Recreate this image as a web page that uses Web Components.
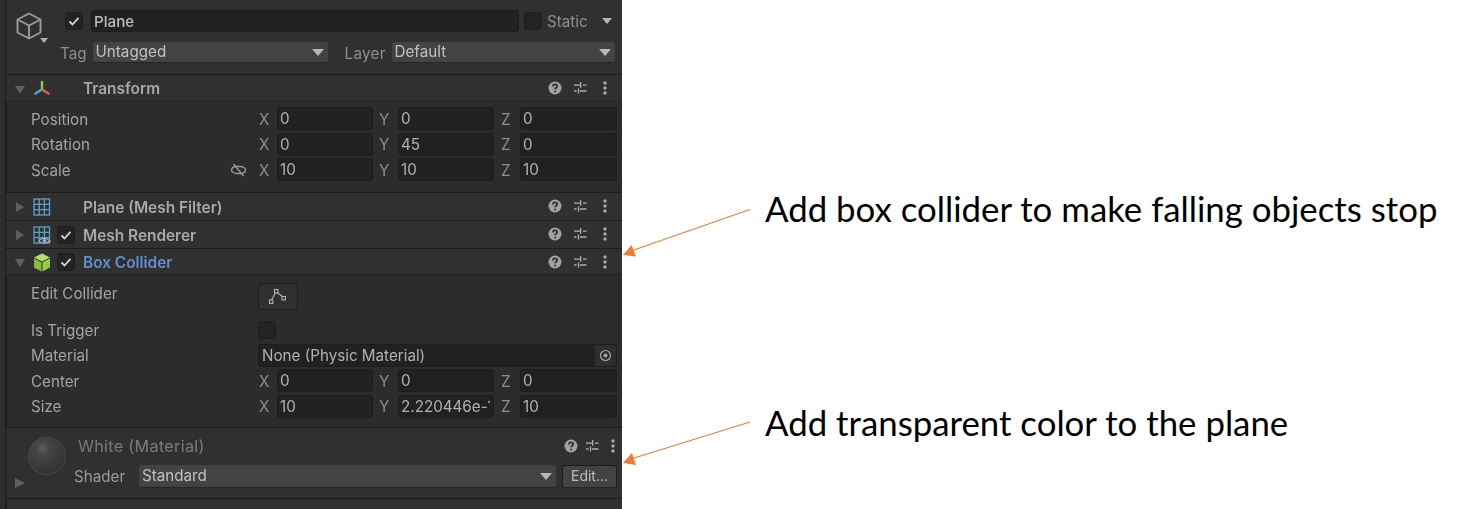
<!DOCTYPE html>
<html>
<head>
<meta charset="utf-8">
<title>Inspector</title>
<style>
  html, body { margin: 0; height: 509px; overflow: hidden; background: #fff; }
  body { display: flex; font-family: Inter, "Noto Sans", sans-serif; }
</style>
</head>
<body>
<u-inspector>
  <u-object-header></u-object-header>

  <u-section title="Transform" open>
    <svg slot="icon" width="18" height="18" viewBox="0 0 18 18" fill="none" stroke-width="2.4" stroke-linecap="round">
      <path d="M9 9V2" stroke="#9bc53d"/><path d="M8 10L2.500 13.500" stroke="#4aa3d8"/><path d="M10 10l5.500 3.500" stroke="#d9683a"/>
    </svg>
  </u-section>
  <u-body style="height:91px;padding-top:4.5px">
    <u-vector label="Position" x="0" y="0" z="0"></u-vector>
    <u-vector label="Rotation" x="0" y="45" z="0"></u-vector>
    <u-vector label="Scale" x="10" y="10" z="10" link></u-vector>
  </u-body>

  <u-section title="Plane (Mesh Filter)">
    <u-grid-icon slot="icon"></u-grid-icon>
  </u-section>
  <u-section title="Mesh Renderer" check>
    <u-grid-icon slot="icon" eye></u-grid-icon>
  </u-section>
  <u-section title="Box Collider" open check accent>
    <u-cube-icon slot="icon"></u-cube-icon>
  </u-section>
  <u-body style="height:152.5px">
    <u-prop label="Edit Collider" style="height:36px">
      <u-button style="width:40px;height:27px;margin-top:7px">
        <svg width="20" height="18" viewBox="0 0 20 18" fill="none" stroke="#b4b4b4" stroke-width="1.1">
          <rect x="1.500" y="12" width="3.400" height="3.400"/><rect x="14" y="8.500" width="3.400" height="3.400"/><rect x="6.500" y="1.500" width="3.400" height="3.400"/>
          <path d="M3.500 12L7.300 4.900M9.500 4.700L14.500 8.700"/>
        </svg>
      </u-button>
    </u-prop>
    <u-prop label="Is Trigger" style="height:31.5px;padding-top:5.5px"><u-check></u-check></u-prop>
    <u-prop label="Material" style="height:25.5px">
      <u-objfield>None (Physic Material)</u-objfield>
    </u-prop>
    <u-vector label="Center" x="0" y="0" z="0"></u-vector>
    <u-vector label="Size" x="10" y="2.220446e-16" z="10"></u-vector>
  </u-body>

  <u-material></u-material>
  <u-body style="flex:1;background:#303030;border-bottom:0"></u-body>
</u-inspector>

<u-notes>
  <u-note style="height:34px;margin-top:191px">Add box collider to make falling objects stop</u-note>
  <u-note style="height:34px;margin-top:180px">Add transparent color to the plane</u-note>
</u-notes>

<script>
// small helper so each element only has to give its css + html
class UBase extends HTMLElement {
  constructor() {
    super();
    this.attachShadow({ mode: 'open' });
  }
  connectedCallback() { this.shadowRoot.innerHTML = `<style>${this.css()}</style>${this.html()}`; }
  css() { return ':host{display:block}'; }
  html() { return '<slot></slot>'; }
}

const TOOLS = `
  <svg width="16" height="16" viewBox="0 0 16 16"><circle cx="8" cy="8" r="6.5" fill="#a2a2a2"/>
    <path d="M5.9 6.5c0-1.4 1-2.1 2.2-2.1s2.1.8 2.1 1.9c0 1.500-2.100 1.500-2.100 3" fill="none" stroke="#303030" stroke-width="1.700"/>
    <circle cx="8.100" cy="11.500" r="1" fill="#303030"/></svg>
  <svg width="14" height="14" viewBox="0 0 14 14" stroke="#b0b0b0" stroke-width="1.300" fill="none">
    <path d="M1 4.200h6M7.700 1v5.800M10 4.200h3.500M1 10h2.500M5.500 7.500V12.500M7 10h6.500"/></svg>
  <svg width="4" height="14" viewBox="0 0 4 14" fill="#adadad"><rect x=".5" y=".5" width="3" height="3" rx=".8"/><rect x=".5" y="5.500" width="3" height="3" rx=".8"/><rect x=".5" y="10.500" width="3" height="3" rx=".8"/></svg>`;

class UInspector extends UBase {
  css() {
    return `:host{display:flex;flex-direction:column;box-sizing:border-box;width:622px;height:509px;flex:none;
      background:#2e2e2e;position:relative;padding-left:6px;
      font:15.2px Inter,"Noto Sans",sans-serif;color:#a4a4a4;filter:blur(.55px)}
      .line{position:absolute;left:5px;top:0;bottom:0;width:1.500px;background:#1c1c1c}`;
  }
  html() { return `<div class="line"></div><slot></slot>`; }
}

class UCheck extends UBase {
  css() {
    return `:host{display:block;flex:none;box-sizing:border-box;width:18px;height:18px;background:#232323;border:1px solid #1e1e1e;border-radius:3px;position:relative}
      svg{position:absolute;left:2px;top:2px}`;
  }
  html() {
    return this.hasAttribute('on') ? `<svg width="12" height="12" viewBox="0 0 12 12" fill="none" stroke="#d4d4d4" stroke-width="1.800"><path d="M1.500 6.500L4.500 9.500L10.500 2.800"/></svg>` : '';
  }
}

class UDropdown extends UBase {
  css() {
    return `:host{display:flex;align-items:center;box-sizing:border-box;height:21px;background:#434343;border-radius:3px;border-bottom:1px solid #252525;
      padding:0 4px 1px 3px;color:#c0c0c0}
      .t{flex:1}
      i{width:0;height:0;border:6px solid transparent;border-top:7px solid #b8b8b8;border-bottom:0;margin-top:2px}`;
  }
  html() { return `<span class="t"><slot></slot></span><i></i>`; }
}

class UObjectHeader extends UBase {
  css() {
    return `:host{display:block;box-sizing:border-box;height:75px;border-bottom:1.500px solid #1c1c1c;background:#303030;position:relative}
      .cube{position:absolute;left:9px;top:11px}
      .arrow{position:absolute;left:34px;top:38px;width:0;height:0;border:4px solid transparent;border-top:5px solid #b0b0b0;border-bottom:0}
      .r1{display:flex;align-items:center;height:22px;padding:10px 0 0 59px}
      .name{box-sizing:border-box;width:428px;height:22px;margin-left:8px;background:#212121;border:1px solid #1c1c1c;border-radius:3px;color:#bdbdbd;padding:0 2px;line-height:22px;font-weight:500}
      .st{margin-left:5px;padding-top:1px;color:#8f8f8f}
      .tri{width:0;height:0;border:5.500px solid transparent;border-top:6.500px solid #b4b4b4;border-bottom:0;margin-left:14px}
      .r2{display:flex;align-items:center;height:21px;padding:10px 0 0 54px;color:#8f8f8f}
      .r2 span{padding-top:2px}
      u-dropdown.tag{width:235px;margin-left:6px}
      u-dropdown.layer{width:223px;margin-left:6px}
      .ll{margin-left:17px;width:41px;letter-spacing:.3px}`;
  }
  html() {
    return `<svg class="cube" width="28" height="30" viewBox="0 0 28 30" fill="none" stroke="#9c9c9c" stroke-width="1.900" stroke-linejoin="round">
        <path d="M14 2.500L25.500 8.500V21.500L14 27.500L2.500 21.500V8.500Z"/><path d="M2.500 8.500L14 14.500L25.500 8.500M14 14.500V27.500"/></svg>
      <div class="arrow"></div>
      <div class="r1"><u-check on></u-check><div class="name">Plane</div><u-check style="margin-left:5px"></u-check><span class="st">Static</span><span class="tri"></span></div>
      <div class="r2"><span>Tag</span><u-dropdown class="tag">Untagged</u-dropdown><span class="ll">Layer</span><u-dropdown class="layer">Default</u-dropdown></div>`;
  }
}

class USection extends UBase {
  css() {
    return `:host{display:flex;align-items:center;box-sizing:border-box;height:28px;background:#303030;border-bottom:1.500px solid #1c1c1c;position:relative;padding:2px 0 0 8px}
      :host([open]){height:26.500px;border-bottom:1px solid #262626}
      .fold{width:11px;flex:none;display:flex;justify-content:center}
      .fold i{width:0;height:0;border:5px solid transparent;border-left:8px solid #5f5f5f;border-right:0}
      :host([open]) .fold i{border:5.500px solid transparent;border-top:8px solid #5f5f5f;border-bottom:0;margin-top:2px}
      .icon{width:18px;height:18px;flex:none;margin-left:8px}
      .ck{width:26px;flex:none;margin-left:6px}
      .title{font-weight:600;color:#a8a8a8;font-size:15.4px;white-space:nowrap}
      :host([accent]) .title{color:#5e8fd0}
      .tools{position:absolute;left:541px;top:5px;display:grid;grid-template-columns:repeat(3,auto);column-gap:9px;align-items:center}
      .tools svg:nth-child(2){margin-left:1px}.tools svg:nth-child(3){margin-left:7px}`;
  }
  html() {
    const ck = this.hasAttribute('check') ? `<div class="ck"><u-check on></u-check></div>` : `<div class="ck"></div>`;
    return `<div class="fold"><i></i></div><div class="icon"><slot name="icon"></slot></div>${ck}
      <span class="title">${this.getAttribute('title')}</span><div class="tools">${TOOLS}</div>`;
  }
}

class UGridIcon extends UBase {
  css() { return `:host{display:block;width:18px;height:18px}`; }
  html() {
    const eye = this.hasAttribute('eye') ? `<path d="M6 15c2-3.500 8-3.500 11 0c-3 3-9 3-11 0Z" fill="#2f2f2f" stroke="#b0b0b0" stroke-width="1.200"/><circle cx="11.500" cy="15" r="1.700" fill="#b0b0b0"/>` : '';
    return `<svg width="18" height="19" viewBox="0 0 18 19" fill="none" stroke="#58a3c6" stroke-width="1.300" style="overflow:visible">
      <rect x="1" y="1" width="15.500" height="16"/><path d="M6.200 1V17M11.400 1V17M1 6.300H16.500M1 11.600H16.500"/>${eye}</svg>`;
  }
}

class UCubeIcon extends UBase {
  css() { return `:host{display:block;width:18px;height:18px}`; }
  html() {
    return `<svg width="18" height="19" viewBox="0 0 18 19" style="overflow:visible">
      <path d="M9 0.500L17 4.500L9 8.500L1 4.500Z" fill="#b6dd6c"/><path d="M1 5.500L8.500 9.300V18.500L1 14.500Z" fill="#86bb3c"/><path d="M17 5.500L9.500 9.300V18.500L17 14.500Z" fill="#98cc48"/></svg>`;
  }
}

class UBody extends UBase {
  css() { return `:host{display:block;box-sizing:border-box;background:#2c2c2c;border-bottom:1.500px solid #1c1c1c}`; }
}

class UField extends UBase {
  css() {
    return `:host{display:block;box-sizing:border-box;height:23px;background:#212121;border:1px solid #1d1d1d;border-radius:3px;
      padding:0 3px 0 2px;line-height:22.5px;color:#b2b2b2;white-space:nowrap}
      span{display:block;overflow:hidden}`;
  }
  html() { return `<span><slot></slot></span>`; }
}

class UVector extends UBase {
  css() {
    return `:host{display:grid;grid-template-columns:252px 19px 96px 25px 96px 26px 97px;height:25.500px;align-items:center}
      .l{padding:1px 11px 0 25px;display:flex;justify-content:space-between;align-items:center}
      .a{color:#8f8f8f;padding-top:1px}`;
  }
  html() {
    const link = this.hasAttribute('link') ? `<svg width="17" height="14" viewBox="0 0 17 14" fill="none" stroke="#9a9a9a" stroke-width="1.400">
      <path d="M4 3.500H10C13 3.500 15.500 5 15.500 7C15.500 8.500 14 10 12 10.300M13 10.500H7C4 10.500 1.500 9 1.500 7C1.500 5.500 3 4 5 3.600M3.500 1L13.500 13"/></svg>` : '';
    const g = n => this.getAttribute(n);
    return `<div class="l"><span>${g('label')}</span>${link}</div>
      <span class="a" style="padding-left:1px">X</span><u-field>${g('x')}</u-field>
      <span class="a" style="padding-left:6px">Y</span><u-field>${g('y')}</u-field>
      <span class="a" style="padding-left:7px">Z</span><u-field>${g('z')}</u-field>`;
  }
}

class UProp extends UBase {
  css() {
    return `:host{display:grid;grid-template-columns:252px 359px;box-sizing:border-box;align-items:center;height:25.500px}
      .l{padding:1px 0 0 25px}`;
  }
  html() { return `<span class="l">${this.getAttribute('label')}</span><div style="display:flex"><slot></slot></div>`; }
}

class UButton extends UBase {
  css() { return `:host{display:flex;align-items:center;justify-content:center;box-sizing:border-box;background:#303030;border:1px solid #1c1c1c;border-radius:3px;color:#bdbdbd}`; }
}

class UObjField extends UBase {
  css() {
    return `:host{display:flex;align-items:center;flex:1;box-sizing:border-box;height:23px;background:#212121;border:1px solid #1d1d1d;border-radius:3px;padding:1px 3px 0;color:#b2b2b2}
      .t{flex:1}
      .pick{display:flex;align-items:center;justify-content:center;width:21px;margin:-1px -3px 0 0;height:21px;background:#2e2e2e;border-radius:0 3px 3px 0}
      svg{display:block}`;
  }
  html() {
    return `<span class="t"><slot></slot></span><span class="pick"><svg width="13" height="13" viewBox="0 0 13 13" fill="none"><circle cx="6.500" cy="6.500" r="5" stroke="#a8a8a8" stroke-width="1.200"/><circle cx="6.500" cy="6.500" r="2" fill="#a8a8a8"/></svg></span>`;
  }
}

class UMaterial extends UBase {
  css() {
    return `:host{display:block;box-sizing:border-box;height:71px;background:#303030;border-bottom:1.500px solid #1c1c1c;position:relative}
      .ball{position:absolute;left:22px;top:9px;width:38px;height:38px;border-radius:50%;
        background:radial-gradient(circle at 38% 32%,#5c5c5c 0,#464646 20%,#383838 55%,#2c2c2c 100%);box-shadow:inset 0 0 0 1px #4c463f}
      .fold{position:absolute;left:9px;top:50px;width:0;height:0;border:5.500px solid transparent;border-left:10px solid #5f5f5f;border-right:0}
      .r1{display:flex;align-items:center;height:37px;padding-left:72px;color:#7b7b7b;font-size:16.2px;letter-spacing:.3px}
      .t{flex:1}
      .tools{display:flex;align-items:center;gap:6px;padding-right:5px}
      .tools svg:nth-child(3){margin-left:6px;margin-right:2px}
      .r2{display:flex;align-items:center;padding-left:68px;color:#9a9a9a}
      .r2 span{width:65px;padding-top:1px}
      u-dropdown{width:417px;height:23px}
      u-button{width:55px;height:23px;margin-left:6px;background:#434343;border-bottom-color:#252525;font-size:14px;padding-bottom:1px}`;
  }
  html() {
    return `<div class="ball"></div><div class="fold"></div>
      <div class="r1"><span class="t">White (Material)</span><div class="tools">${TOOLS}</div></div>
      <div class="r2"><span>Shader</span><u-dropdown>Standard</u-dropdown><u-button>Edit...</u-button></div>`;
  }
}

class UNotes extends UBase {
  css() {
    return `:host{display:flex;flex-direction:column;flex:1;position:relative;padding-left:143px;color:#000;font:34.8px Lato,"Liberation Sans",sans-serif}
      svg{position:absolute;left:0;top:0;overflow:visible}`;
  }
  html() {
    return `<slot></slot>
      <svg width="140" height="509" viewBox="622 0 140 509">
        <path d="M750 209.500L631 251" stroke="#ed7d31" stroke-width="1.100"/><path d="M623 255L631.500 245L636 256.500Z" fill="#ed7d31"/>
        <path d="M750 422L631 459" stroke="#ed7d31" stroke-width="1.100"/><path d="M623 463L632 453L636 465Z" fill="#ed7d31"/>
      </svg>`;
  }
}

class UNote extends UBase {
  css() { return `:host{display:flex;align-items:center;white-space:nowrap}`; }
}

customElements.define('u-inspector', UInspector);
customElements.define('u-check', UCheck);
customElements.define('u-dropdown', UDropdown);
customElements.define('u-object-header', UObjectHeader);
customElements.define('u-section', USection);
customElements.define('u-grid-icon', UGridIcon);
customElements.define('u-cube-icon', UCubeIcon);
customElements.define('u-body', UBody);
customElements.define('u-field', UField);
customElements.define('u-vector', UVector);
customElements.define('u-prop', UProp);
customElements.define('u-button', UButton);
customElements.define('u-objfield', UObjField);
customElements.define('u-material', UMaterial);
customElements.define('u-notes', UNotes);
customElements.define('u-note', UNote);
</script>
</body>
</html>
